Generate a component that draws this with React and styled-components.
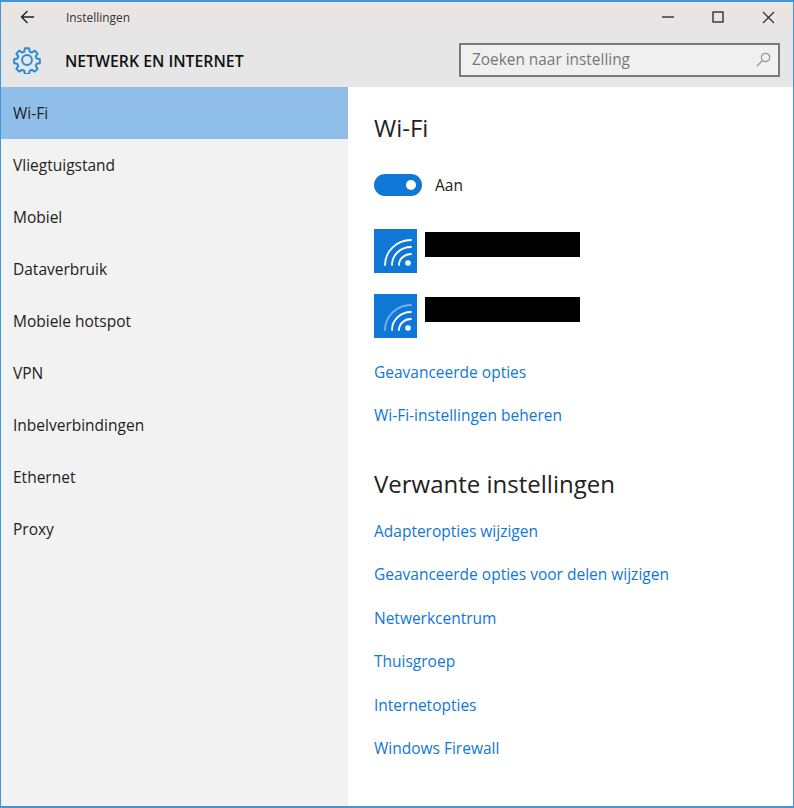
import React from 'react'
import styled, { createGlobalStyle } from 'styled-components'

const Global = createGlobalStyle`
  html, body { margin: 0; padding: 0; background: white; }
  * { box-sizing: border-box; }
`

const Window = styled.div`
  width: 794px;
  height: 808px;
  border: 1px solid #3f97d8;
  border-top-width: 2px;
  border-bottom-width: 2px;
  display: flex;
  flex-direction: column;
  overflow: hidden;
  font-family: "Open Sans", "Noto Sans", sans-serif;
  background: white;
`

const Header = styled.div`
  height: 85px;
  background: #e6e6e6;
  flex-shrink: 0;
`

const TitleBar = styled.div`
  height: 30px;
  display: flex;
  align-items: center;
  background: linear-gradient(#ece4df, #e6e6e6);
`

const BackButton = styled.div`
  width: 65px;
  padding-left: 19px;
  display: flex;
  align-items: center;
`

const AppName = styled.div`
  font-size: 11.9px;
  color: #333;
  flex: 1;
`

const WinButtons = styled.div`
  display: flex;
  align-items: center;
  gap: 38px;
  padding-right: 18px;
`

const SearchRow = styled.div`
  height: 55px;
  display: flex;
  align-items: center;
  padding: 0 13px 0 12px;
`

const GearWrap = styled.div`
  width: 52px;
  display: flex;
`

const Section = styled.div`
  flex: 1;
  padding-top: 2px;
  font-size: 15.8px;
  font-weight: 600;
  color: #111;
`

const SearchBox = styled.div`
  width: 321px;
  height: 34px;
  border: 2px solid #7a7a7a;
  background: #f0f0f0;
  display: flex;
  align-items: center;
  justify-content: space-between;
  padding: 0 7px 0 11px;
  font-size: 15.4px;
  color: #777;
`

const Body = styled.div`
  flex: 1;
  display: flex;
  min-height: 0;
`

const Sidebar = styled.div`
  width: 347px;
  background: #f2f2f2;
`

const NavItem = styled.div`
  height: 52px;
  display: flex;
  align-items: center;
  padding-left: 12px;
  font-size: 15.5px;
  color: #222;
  background: ${p => (p.$active ? '#8fbfe8' : 'transparent')};
`

const Content = styled.div`
  flex: 1;
  padding: 22px 0 0 26px;
`

const Heading = styled.div`
  font-size: 24px;
  line-height: 38px;
  color: #222;
  margin: ${p => p.$top || 0}px 0 ${p => p.$bottom || 0}px;
`

const ToggleRow = styled.div`
  display: flex;
  align-items: center;
  gap: 13px;
  margin-top: 27px;
  font-size: 15.5px;
  color: #222;
`

const Toggle = styled.div`
  width: 48px;
  height: 22px;
  border-radius: 11px;
  background: #0f78d6;
  display: flex;
  align-items: center;
  justify-content: flex-end;
  padding-right: 6px;
`

const Knob = styled.div`
  width: 10px;
  height: 10px;
  border-radius: 50%;
  background: white;
`

const Networks = styled.div`
  display: flex;
  flex-direction: column;
  gap: 21px;
  margin-top: 33px;
`

const Network = styled.div`
  display: flex;
  gap: 8px;
`

const NetIcon = styled.div`
  width: 43px;
  height: 44px;
  background: #0f78d6;
`

const Redacted = styled.div`
  width: 155px;
  height: 25px;
  margin-top: 3px;
  background: black;
`

const LinkList = styled.div`
  display: flex;
  flex-direction: column;
  margin-top: ${p => p.$top || 0}px;
`

const SettingLink = styled.div`
  height: 43.5px;
  display: flex;
  align-items: center;
  font-size: 15.5px;
  color: #0f78d6;
`

const WifiIcon = ({ weak }) => (
  <svg width="43" height="44" viewBox="0 0 43 44" fill="none" stroke="white" strokeWidth="1.8" strokeLinecap="round">
    <circle cx="34" cy="34" r="2.8" fill="white" stroke="none" />
    <path d="M25 36 A12 11 0 0 1 37 25" />
    <path d="M18 36 A19 18 0 0 1 37 18" />
    <path d="M11 36 A26 25 0 0 1 37 11" opacity={weak ? 0.45 : 1} />
  </svg>
)

const Gear = () => (
  <svg width="28" height="28" viewBox="0 0 24 24" fill="none" stroke="#2b8bd6" strokeWidth="1.7" strokeLinejoin="round">
    <circle cx="12" cy="12" r="4.2" />
    <path d="M10.2 2h3.6l.5 2.8 1.9.8 2.4-1.6 2.5 2.5-1.6 2.4.8 1.9 2.7.5v3.4l-2.7.5-.8 1.9 1.6 2.4-2.5 2.5-2.4-1.6-1.9.8-.5 2.8h-3.6l-.5-2.8-1.9-.8-2.4 1.6-2.5-2.5 1.6-2.4-.8-1.9-2.7-.5v-3.4l2.7-.5.8-1.9-1.6-2.4 2.5-2.5 2.4 1.6 1.9-.8z" />
  </svg>
)

const nav = ['Wi-Fi', 'Vliegtuigstand', 'Mobiel', 'Dataverbruik', 'Mobiele hotspot', 'VPN', 'Inbelverbindingen', 'Ethernet', 'Proxy']
const related = ['Adapteropties wijzigen', 'Geavanceerde opties voor delen wijzigen', 'Netwerkcentrum', 'Thuisgroep', 'Internetopties', 'Windows Firewall']

export default function App() {
  return (
    <Window>
      <Global />
      <Header>
        <TitleBar>
          <BackButton>
            <svg width="15" height="14" viewBox="0 0 15 14" fill="none" stroke="#222" strokeWidth="1.4">
              <path d="M14 7H1.5M7.5 1 1.5 7l6 6" />
            </svg>
          </BackButton>
          <AppName>Instellingen</AppName>
          <WinButtons>
            <svg width="12" height="12" viewBox="0 0 12 12" stroke="#333" strokeWidth="1.4"><path d="M0 6h12" /></svg>
            <svg width="12" height="12" viewBox="0 0 12 12" fill="none" stroke="#333" strokeWidth="1.4"><rect x="1" y="1" width="10" height="10" /></svg>
            <svg width="13" height="13" viewBox="0 0 13 13" stroke="#333" strokeWidth="1.3"><path d="M1 1l11 11M12 1 1 12" /></svg>
          </WinButtons>
        </TitleBar>
        <SearchRow>
          <GearWrap><Gear /></GearWrap>
          <Section>NETWERK EN INTERNET</Section>
          <SearchBox>
            Zoeken naar instelling
            <svg width="15" height="15" viewBox="0 0 15 15" fill="none" stroke="#999" strokeWidth="1.2">
              <circle cx="9.5" cy="5.5" r="4.2" />
              <path d="M6.5 8.5 1 14" />
            </svg>
          </SearchBox>
        </SearchRow>
      </Header>
      <Body>
        <Sidebar>
          {nav.map((n, i) => <NavItem key={n} $active={i === 0}>{n}</NavItem>)}
        </Sidebar>
        <Content>
          <Heading>Wi-Fi</Heading>
          <ToggleRow><Toggle><Knob /></Toggle>Aan</ToggleRow>
          <Networks>
            <Network><NetIcon><WifiIcon /></NetIcon><Redacted /></Network>
            <Network><NetIcon><WifiIcon weak /></NetIcon><Redacted /></Network>
          </Networks>
          <LinkList $top={12}>
            <SettingLink>Geavanceerde opties</SettingLink>
            <SettingLink>Wi-Fi-instellingen beheren</SettingLink>
          </LinkList>
          <Heading $top={28}>Verwante instellingen</Heading>
          <LinkList $top={6}>
            {related.map(r => <SettingLink key={r}>{r}</SettingLink>)}
          </LinkList>
        </Content>
      </Body>
    </Window>
  )
}
